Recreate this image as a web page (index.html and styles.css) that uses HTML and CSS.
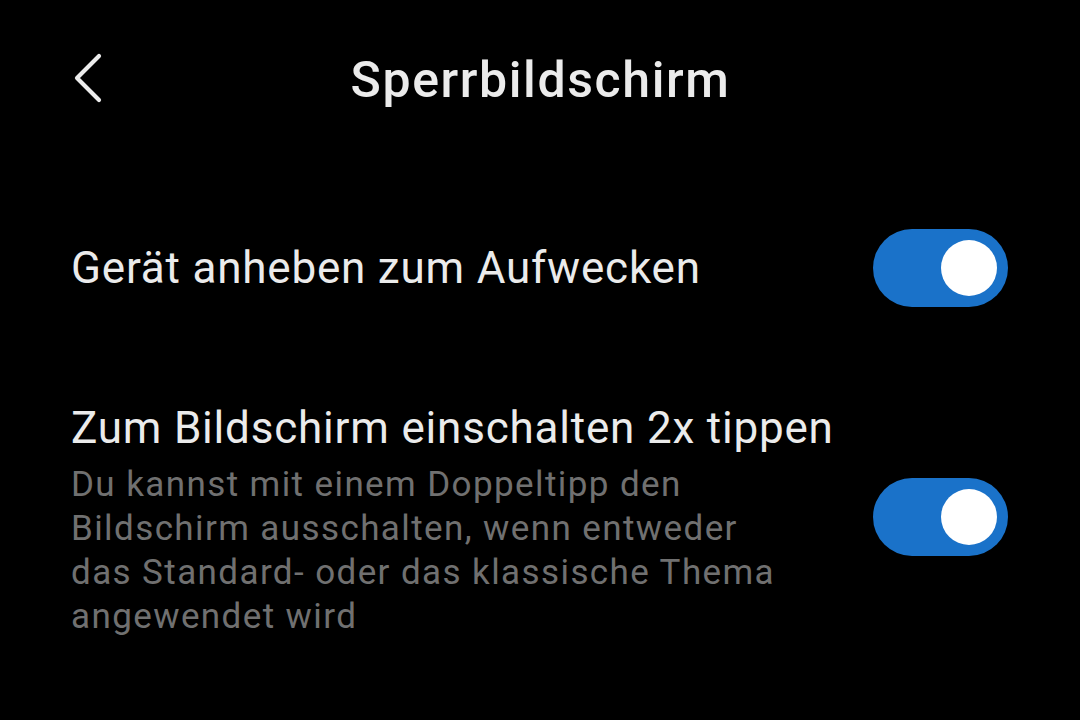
FILE: index.html
```
<!DOCTYPE html>
<html lang="de">
<head>
<meta charset="utf-8">
<link rel="stylesheet" href="styles.css">
</head>
<body>
<div class="page">
  <header class="header">
    <svg class="back" width="32" height="52" viewBox="0 0 32 52">
      <path d="M26 4 L4 26 L26 48" fill="none" stroke="#ececec" stroke-width="4.2" stroke-linecap="round" stroke-linejoin="round"/>
    </svg>
    <h1 class="title">Sperrbildschirm</h1>
  </header>
  <div class="row row-first">
    <div class="text">
      <div class="label">Gerät anheben zum Aufwecken</div>
    </div>
    <div class="toggle"><span class="knob"></span></div>
  </div>
  <div class="row row-second">
    <div class="text">
      <div class="label">Zum Bildschirm einschalten 2x tippen</div>
      <div class="desc">Du kannst mit einem Doppeltipp den<br>Bildschirm ausschalten, wenn entweder<br>das Standard- oder das klassische Thema<br>angewendet wird</div>
    </div>
    <div class="toggle"><span class="knob"></span></div>
  </div>
</div>
</body>
</html>
```
FILE: styles.css
```
html, body {
  margin: 0;
  padding: 0;
  background: #000;
}
body {
  width: 1080px;
  height: 720px;
  overflow: hidden;
  font-family: Roboto, "Liberation Sans", sans-serif;
}
.page {
  padding: 0 71px 0 71px;
}
.header {
  position: relative;
  height: 160px;
  display: flex;
  align-items: center;
  justify-content: center;
}
.back {
  position: absolute;
  left: 2px;
  top: 52px;
}
.title {
  margin: 0 0 0 1px;
  font-size: 50px;
  font-weight: 500;
  color: #ebebeb;
  line-height: 1;
  letter-spacing: 1.6px;
}
.row {
  display: flex;
  align-items: center;
  justify-content: space-between;
}
.row-first {
  margin-top: 69px;
}
.row-second {
  margin-top: 95px;
}
.label {
  font-size: 44px;
  color: #ebebeb;
  line-height: 52px;
  letter-spacing: 0.8px;
}
.desc {
  margin-top: 9px;
  font-size: 35px;
  color: #707070;
  line-height: 44px;
  letter-spacing: 1.4px;
}
.toggle {
  width: 135px;
  height: 78px;
  border-radius: 39px;
  background: #1a72c9;
  position: relative;
  flex: none;
  margin-right: 1px;
}
.row-second .toggle {
  margin-top: -7px;
}
.knob {
  position: absolute;
  right: 11px;
  top: 11px;
  width: 56px;
  height: 56px;
  border-radius: 50%;
  background: #fff;
}
```
